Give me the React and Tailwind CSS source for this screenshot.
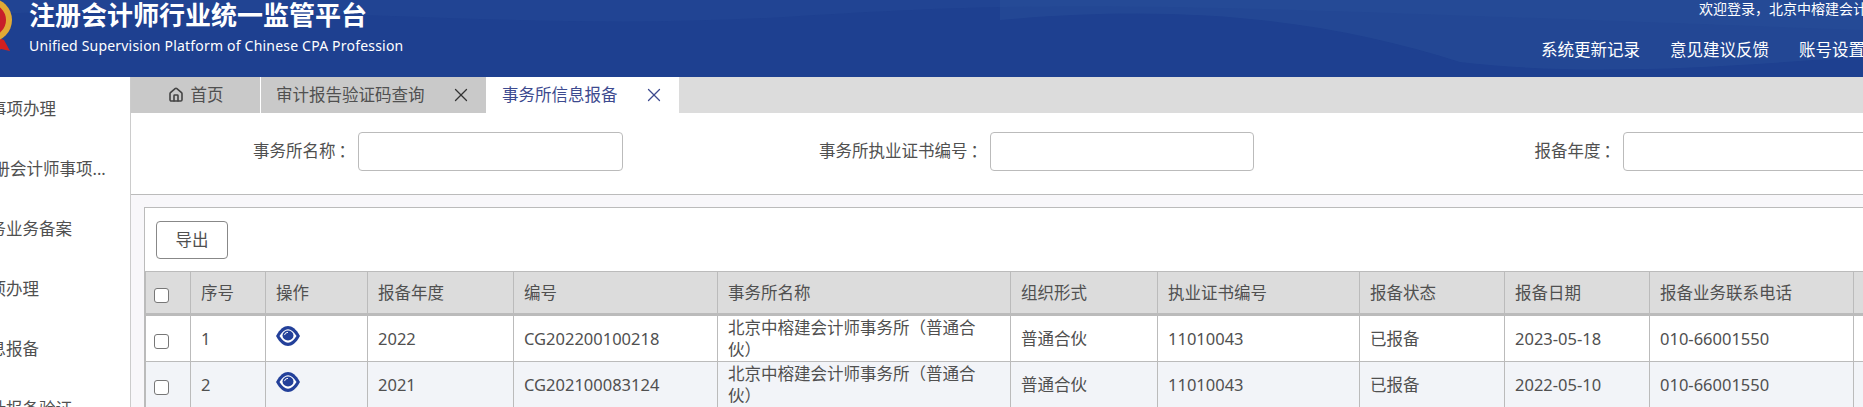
import React from 'react';
import { House, X } from 'lucide-react';

const font = 'font-["Noto_Sans","Noto_Sans_CJK_SC",sans-serif]';

const menu = [
  { label: '总所事项办理', indent: '-ml-[16px]' },
  { label: '注册会计师事项...', indent: 'ml-[4px]' },
  { label: '事务业务备案', indent: '' },
  { label: '事项办理', indent: '' },
  { label: '信息报备', indent: '' },
  { label: '审计报备验证', indent: '' },
];

const columns = [
  { title: '序号', width: 'w-[75px]' },
  { title: '操作', width: 'w-[102px]' },
  { title: '报备年度', width: 'w-[146px]' },
  { title: '编号', width: 'w-[204px]' },
  { title: '事务所名称', width: 'w-[293px]' },
  { title: '组织形式', width: 'w-[147px]' },
  { title: '执业证书编号', width: 'w-[202px]' },
  { title: '报备状态', width: 'w-[145px]' },
  { title: '报备日期', width: 'w-[145px]' },
  { title: '报备业务联系电话', width: 'w-[204px]' },
  { title: '', width: 'w-[150px]' },
];

const rows = [
  { no: 1, year: '2022', code: 'CG202200100218', date: '2023-05-18' },
  { no: 2, year: '2021', code: 'CG202100083124', date: '2022-05-10' },
];

function SearchField({ label, labelWidth, inputWidth }) {
  return (
    <div className="flex items-center">
      <label className={`${labelWidth} text-right pr-[3px]`}>
        {label}<span className="ml-[3px]">：</span>
      </label>
      <input className={`${inputWidth} h-[39px] bg-white border border-[#bbb] rounded`} />
    </div>
  );
}

function Logo() {
  return (
    <svg className="absolute left-[-34px] top-[-4px]" width="48" height="62" viewBox="0 0 48 62">
      <path d="M28 40l10 4 6 11-9-2-6 5-4-12z" fill="#d3201f" />
      <circle cx="24" cy="24" r="22" fill="#e2aa35" />
      <circle cx="24" cy="24" r="16" fill="#c8202a" />
    </svg>
  );
}

function EyeIcon() {
  return (
    <svg className="-mt-[6px]" width="24" height="20" viewBox="0 0 24 22" preserveAspectRatio="none">
      <path d="M0 11C4 3 8 0 12 0s8 3 12 11c-4 8-8 11-12 11S4 19 0 11z" fill="#23409a" />
      <path d="M3.5 11C6.5 6 9 3.6 12 3.6S17.500 6 20.500 11c-3 5-5.500 7.400-8.500 7.400S6.500 16 3.500 11z" fill="#fff" />
      <circle cx="12" cy="10.500" r="5.500" fill="#23409a" />
      <path d="M8.500 10a3.500 3.500 0 0 1 3.500-3" stroke="#fff" strokeWidth="1" fill="none" />
    </svg>
  );
}

function Header() {
  return (
    <header className="relative h-[77px] shrink-0 overflow-hidden bg-[#1e4090] text-white">
      <svg className="absolute inset-0" width="1863" height="77" viewBox="0 0 1863 77">
        <path d="M0 14C300 0 520 34 800 16S1200 6 1863 30V0H0z" fill="#2a4f9c" opacity="0.25" />
        <path d="M1000 20c200-18 340 4 460 42 120 14 260 6 403-6V0H1000z" fill="#2f559f" opacity="0.35" />
      </svg>
      <Logo />
      <div className="absolute left-[29px] top-[-1px]">
        <h1 className="text-[26px] leading-[32px] font-bold whitespace-nowrap">注册会计师行业统一监管平台</h1>
        <p className="text-[14px] leading-[20px] mt-[5px] tracking-[0.2px] whitespace-nowrap">Unified Supervision Platform of Chinese CPA Profession</p>
      </div>
      <div className="absolute left-[1699px] top-[-1px] text-[14px] leading-[19px] whitespace-nowrap">欢迎登录，北京中榕建会计师事务所</div>
      <nav className="absolute left-[1541px] top-[38px] flex gap-[30px] text-[16.5px] leading-[24px] whitespace-nowrap">
        <span>系统更新记录</span>
        <span>意见建议反馈</span>
        <span>账号设置</span>
      </nav>
    </header>
  );
}

function Sidebar() {
  return (
    <aside className="w-[131px] shrink-0 overflow-hidden border-r border-[#ccc] bg-white">
      <ul className="-ml-[27px] pt-[2px]">
        {menu.map((item) => (
          <li key={item.label} className={`${item.indent} h-[60px] leading-[60px] whitespace-nowrap`}>{item.label}</li>
        ))}
      </ul>
    </aside>
  );
}

function Tabs() {
  return (
    <div className="flex h-[36px] shrink-0 bg-[#dcdcdc] leading-[36px]">
      <div className="w-[130px] flex items-center justify-center gap-[7px] bg-[#c9c9c9] border-r border-white">
        <House size={16} strokeWidth={2.4} className="text-[#444]" />
        <span>首页</span>
      </div>
      <div className="w-[225px] flex items-center justify-between pl-[15px] pr-[14px] bg-[#c9c9c9]">
        <span>审计报告验证码查询</span>
        <X size={22} strokeWidth={1.4} className="text-[#333]" />
      </div>
      <div className="w-[193px] flex items-center justify-between pl-[16px] pr-[14px] bg-white text-[#3d4a8f]">
        <span>事务所信息报备</span>
        <X size={22} strokeWidth={1.4} />
      </div>
    </div>
  );
}

function Cell({ children }) {
  return <td className="border border-[#bbb] px-[10px] align-middle">{children}</td>;
}

function ResultTable() {
  return (
    <table className="table-fixed border-collapse w-[1756px] leading-[22px]">
      <thead>
        <tr className="h-[43px] bg-[#dcdcdc] border-b-[3px] border-[#bbb]">
          <th className="w-[45px] border border-[#bbb] pl-[8px] font-normal text-left align-middle">
            <input type="checkbox" className="block w-[15px] h-[15px] appearance-none bg-white border border-[#777] rounded-[3px] mt-[6px]" />
          </th>
          {columns.map((col) => (
            <th key={col.title} className={`${col.width} border border-[#bbb] px-[10px] font-normal text-left align-middle`}>{col.title}</th>
          ))}
        </tr>
      </thead>
      <tbody>
        {rows.map((row) => (
          <tr key={row.no} className={row.no % 2 === 0 ? 'h-[47px] bg-[#f2f4f8]' : 'h-[47px] bg-white'}>
            <td className="border border-[#bbb] pl-[8px]">
              <input type="checkbox" className="block w-[15px] h-[15px] appearance-none bg-white border border-[#777] rounded-[3px] mt-[5px]" />
            </td>
            <Cell>{row.no}</Cell>
            <Cell><EyeIcon /></Cell>
            <Cell>{row.year}</Cell>
            <Cell>{row.code}</Cell>
            <Cell>北京中榕建会计师事务所（普通合伙）</Cell>
            <Cell>普通合伙</Cell>
            <Cell>11010043</Cell>
            <Cell>已报备</Cell>
            <Cell>{row.date}</Cell>
            <Cell>010-66001550</Cell>
            <Cell />
          </tr>
        ))}
      </tbody>
    </table>
  );
}

export default function App() {
  return (
    <div className={`${font} w-[1863px] h-[407px] overflow-hidden flex flex-col bg-white text-[16.5px] text-[#505050]`}>
      <Header />
      <div className="flex flex-1 min-h-0">
        <Sidebar />
        <main className="flex-1 min-w-0 flex flex-col overflow-hidden bg-[#f8f7fa]">
          <Tabs />
          <div className="flex shrink-0 items-center h-[82px] pb-[4px] bg-white border-b border-[#bbb]">
            <SearchField label="事务所名称" labelWidth="w-[227px]" inputWidth="w-[265px]" />
            <SearchField label="事务所执业证书编号" labelWidth="w-[367px]" inputWidth="w-[264px]" />
            <SearchField label="报备年度" labelWidth="w-[369px]" inputWidth="w-[264px]" />
          </div>
          <div className="ml-[13px] mt-[12px] w-[1800px] bg-white border border-[#bbb] border-b-0">
            <div className="px-[11px] pt-[13px] pb-[12px]">
              <button className="w-[72px] h-[38px] border border-[#888] rounded text-[#505050]">导出</button>
            </div>
            <ResultTable />
          </div>
        </main>
      </div>
    </div>
  );
}
